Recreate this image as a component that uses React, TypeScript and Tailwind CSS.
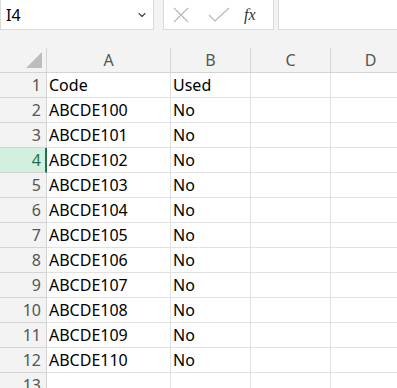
import { ChevronDown } from 'lucide-react'

const rows = [
  ['Code', 'Used'],
  ...Array.from({ length: 11 }, (_, i) => [`ABCDE${100 + i}`, 'No']),
  ['', ''],
]

const cols = ['A', 'B', 'C', 'D']

export default function App() {
  return (
    <div className="h-[388px] w-[397px] overflow-hidden bg-[#f3f3f3] font-['Noto_Sans',sans-serif] text-[16px] text-black">
      <div className="flex h-[30px] items-stretch">
        <div className="flex w-[154px] items-center justify-between border border-t-0 border-[#dadada] bg-white pl-[5px] pr-[5px]">
          <span className="text-[16px]">I4</span>
          <ChevronDown size={12} strokeWidth={2.2} className="text-[#444]" />
        </div>
        <div className="ml-[9px] flex w-[111px] items-center border border-t-0 border-[#dadada] bg-white">
          <svg width="18" height="18" viewBox="0 0 18 18" className="ml-[8px]">
            <path d="M2 2 L16 16 M16 2 L2 16" stroke="#b8b8b8" strokeWidth="1.2" />
          </svg>
          <svg width="22" height="16" viewBox="0 0 22 16" className="ml-[18px]">
            <path d="M1 8 L7 14 L21 1" stroke="#b8b8b8" strokeWidth="1.2" fill="none" />
          </svg>
          <span className="ml-[14px] font-['Liberation_Serif',serif] text-[16px] italic text-[#333]">fx</span>
        </div>
        <div className="ml-[4px] flex-1 border border-r-0 border-t-0 border-[#dadada] bg-white" />
      </div>
      <div className="h-[18px]" />
      <div className="grid grid-cols-[47px_124px_80px_80px_80px] bg-white">
        <div className="relative h-[25px] border-b border-r border-[#d4d4d4] bg-[#f3f3f3]">
          <div className="absolute bottom-[4px] right-[4px] h-0 w-0 border-b-[16px] border-l-[16px] border-b-[#bdbdbd] border-l-transparent" />
        </div>
        {cols.map(c => (
          <div
            key={c}
            className="flex h-[25px] items-center justify-center border-b border-r border-[#d4d4d4] bg-[#f3f3f3] text-[#555]"
          >
            {c}
          </div>
        ))}
        {rows.map((r, i) => {
          const active = i === 3
          return (
            <div key={i} className="contents">
              <div
                className={
                  active
                    ? 'flex h-[25px] items-center justify-end border-b border-r-2 border-b-[#d4d4d4] border-r-[#217346] bg-[#d2efdf] pr-[4px] text-[#217346]'
                    : 'flex h-[25px] items-center justify-end border-b border-r border-[#d4d4d4] bg-[#f3f3f3] pr-[5px] text-[#555]'
                }
              >
                {i + 1}
              </div>
              <div className="flex h-[25px] items-center border-b border-r border-[#e1e1e1] pl-[2px]">{r[0]}</div>
              <div className="flex h-[25px] items-center border-b border-r border-[#e1e1e1] pl-[2px]">{r[1]}</div>
              <div className="h-[25px] border-b border-r border-[#e1e1e1]" />
              <div className="h-[25px] border-b border-r border-[#e1e1e1]" />
            </div>
          )
        })}
      </div>
    </div>
  )
}
